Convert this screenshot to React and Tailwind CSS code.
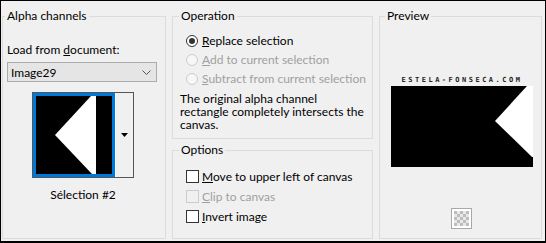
import React from "react";

// small radio button
const Radio = ({ checked, disabled, children }) => (
  <div className="flex items-center h-[19px]">
    <span
      className={
        disabled
          ? "flex items-center justify-center w-[12px] h-[12px] rounded-full border border-[#cccccc] bg-[#f7f7f7]"
          : "flex items-center justify-center w-[12px] h-[12px] rounded-full border border-[#333333] bg-white"
      }
    >
      {checked && <span className="w-[6px] h-[6px] rounded-full bg-[#333333]"></span>}
    </span>
    <span className={disabled ? "ml-[4px] whitespace-nowrap text-[#a0a0a0]" : "ml-[4px] whitespace-nowrap text-black"}>
      {children}
    </span>
  </div>
);

// small checkbox
const Check = ({ disabled, children }) => (
  <div className="flex items-center h-[20px]">
    <span
      className={
        disabled
          ? "w-[13px] h-[13px] border border-[#cccccc] bg-[#f0f0f0]"
          : "w-[13px] h-[13px] border border-[#333333] bg-white"
      }
    ></span>
    <span className={disabled ? "ml-[3px] whitespace-nowrap text-[#a0a0a0]" : "ml-[3px] whitespace-nowrap text-black"}>
      {children}
    </span>
  </div>
);

const App = () => {
  return (
    <div className="flex w-[546px] h-[243px] border border-b-2 border-black bg-[#f0f0f0] pl-[1px] pt-[8px] text-[12px] leading-[15px] text-black font-['Lato',sans-serif]">
      {/* alpha channels */}
      <fieldset className="flex flex-col w-[164px] h-[230px] border border-[#dcdcdc]">
        <legend className="ml-[2px] px-[2px] leading-[14px]">Alpha channels</legend>

        <p className="mt-[19px] pl-[4px]">
          Load from <u>d</u>ocument:
        </p>

        {/* select */}
        <div className="flex items-center justify-between mt-[5px] ml-[4px] w-[150px] h-[20px] border border-[#acacac] bg-[#e5e5e5] pl-[3px] pr-[5px]">
          <span>Image29</span>
          <svg width="9" height="5" viewBox="0 0 9 5">
            <path d="M0.5 0.5 L4.5 4.5 L8.5 0.5" fill="none" stroke="#555" strokeWidth="1" />
          </svg>
        </div>

        {/* thumbnail */}
        <div className="flex mt-[10px] ml-[29px] w-[102px] h-[86px] border border-[#555555] bg-[#f0f0f0]">
          <div className="w-[82px] h-[84px] border-[3px] border-[#0078d7] bg-black">
            <svg width="76" height="78" viewBox="0 0 76 78">
              <polygon points="19,39 55,0 60,0 60,78 56,78" fill="#fff" />
            </svg>
          </div>
          <div className="flex items-center justify-center grow border-l border-white">
            <svg width="7" height="4" viewBox="0 0 7 4">
              <polygon points="0,0 7,0 3.5,4" fill="#000" />
            </svg>
          </div>
        </div>

        <p className="mt-[9px] text-center pr-[2px]">Sélection #2</p>
      </fieldset>

      {/* middle column */}
      <div className="flex flex-col ml-[6px] w-[201px]">
        {/* operation */}
        <fieldset className="flex flex-col h-[130px] border border-[#dcdcdc]">
          <legend className="ml-[6px] px-[2px] leading-[14px]">Operation</legend>
          <div className="mt-[8px] pl-[13px]">
            <Radio checked>
              <u>R</u>eplace selection
            </Radio>
            <Radio disabled>
              <u>A</u>dd to current selection
            </Radio>
            <Radio disabled>
              <u>S</u>ubtract from current selection
            </Radio>
          </div>
          <p className="mt-[4px] pl-[7px] leading-[13px] whitespace-nowrap">
            The original alpha channel
            <br />
            rectangle completely intersects the
            <br />
            canvas.
          </p>
        </fieldset>

        {/* options */}
        <fieldset className="flex flex-col mt-[4px] h-[96px] border border-[#dcdcdc]">
          <legend className="ml-[6px] px-[2px] leading-[14px]">Options</legend>
          <div className="mt-[9px] pl-[13px]">
            <Check>
              <u>M</u>ove to upper left of canvas
            </Check>
            <Check disabled>
              <u>C</u>lip to canvas
            </Check>
            <Check>
              <u>I</u>nvert image
            </Check>
          </div>
        </fieldset>
      </div>

      {/* preview */}
      <fieldset className="flex flex-col ml-[6px] w-[163px] h-[230px] border border-[#dcdcdc]">
        <legend className="ml-[5px] px-[2px] leading-[14px]">Preview</legend>
        <p className="mt-[53px] ml-[11px] w-[142px] text-center text-[7px] leading-[8px] tracking-[2.5px] font-bold text-[#222] font-['DejaVu_Sans_Mono',monospace]">
          ESTELA-FONSECA.COM
        </p>
        <div className="mt-[2px] ml-[11px] w-[142px] h-[81px] bg-black">
          <svg width="142" height="81" viewBox="0 0 142 81">
            <polygon points="104,35 136,0 142,0 142,71 141,71" fill="#fff" />
          </svg>
        </div>
        <div className="mt-[41px] ml-[71px] w-[21px] h-[21px] border border-[#a8a8a8] bg-white p-[2px]">
          <svg width="15" height="15" viewBox="0 0 15 15">
            <rect width="15" height="15" fill="#e8e8e8" />
            <rect x="0" y="0" width="3" height="3" fill="#bdbdbd" />
            <rect x="6" y="0" width="3" height="3" fill="#bdbdbd" />
            <rect x="12" y="0" width="3" height="3" fill="#bdbdbd" />
            <rect x="3" y="3" width="3" height="3" fill="#bdbdbd" />
            <rect x="9" y="3" width="3" height="3" fill="#bdbdbd" />
            <rect x="0" y="6" width="3" height="3" fill="#bdbdbd" />
            <rect x="6" y="6" width="3" height="3" fill="#bdbdbd" />
            <rect x="12" y="6" width="3" height="3" fill="#bdbdbd" />
            <rect x="3" y="9" width="3" height="3" fill="#bdbdbd" />
            <rect x="9" y="9" width="3" height="3" fill="#bdbdbd" />
            <rect x="0" y="12" width="3" height="3" fill="#bdbdbd" />
            <rect x="6" y="12" width="3" height="3" fill="#bdbdbd" />
            <rect x="12" y="12" width="3" height="3" fill="#bdbdbd" />
          </svg>
        </div>
      </fieldset>
    </div>
  );
};

export default App;
